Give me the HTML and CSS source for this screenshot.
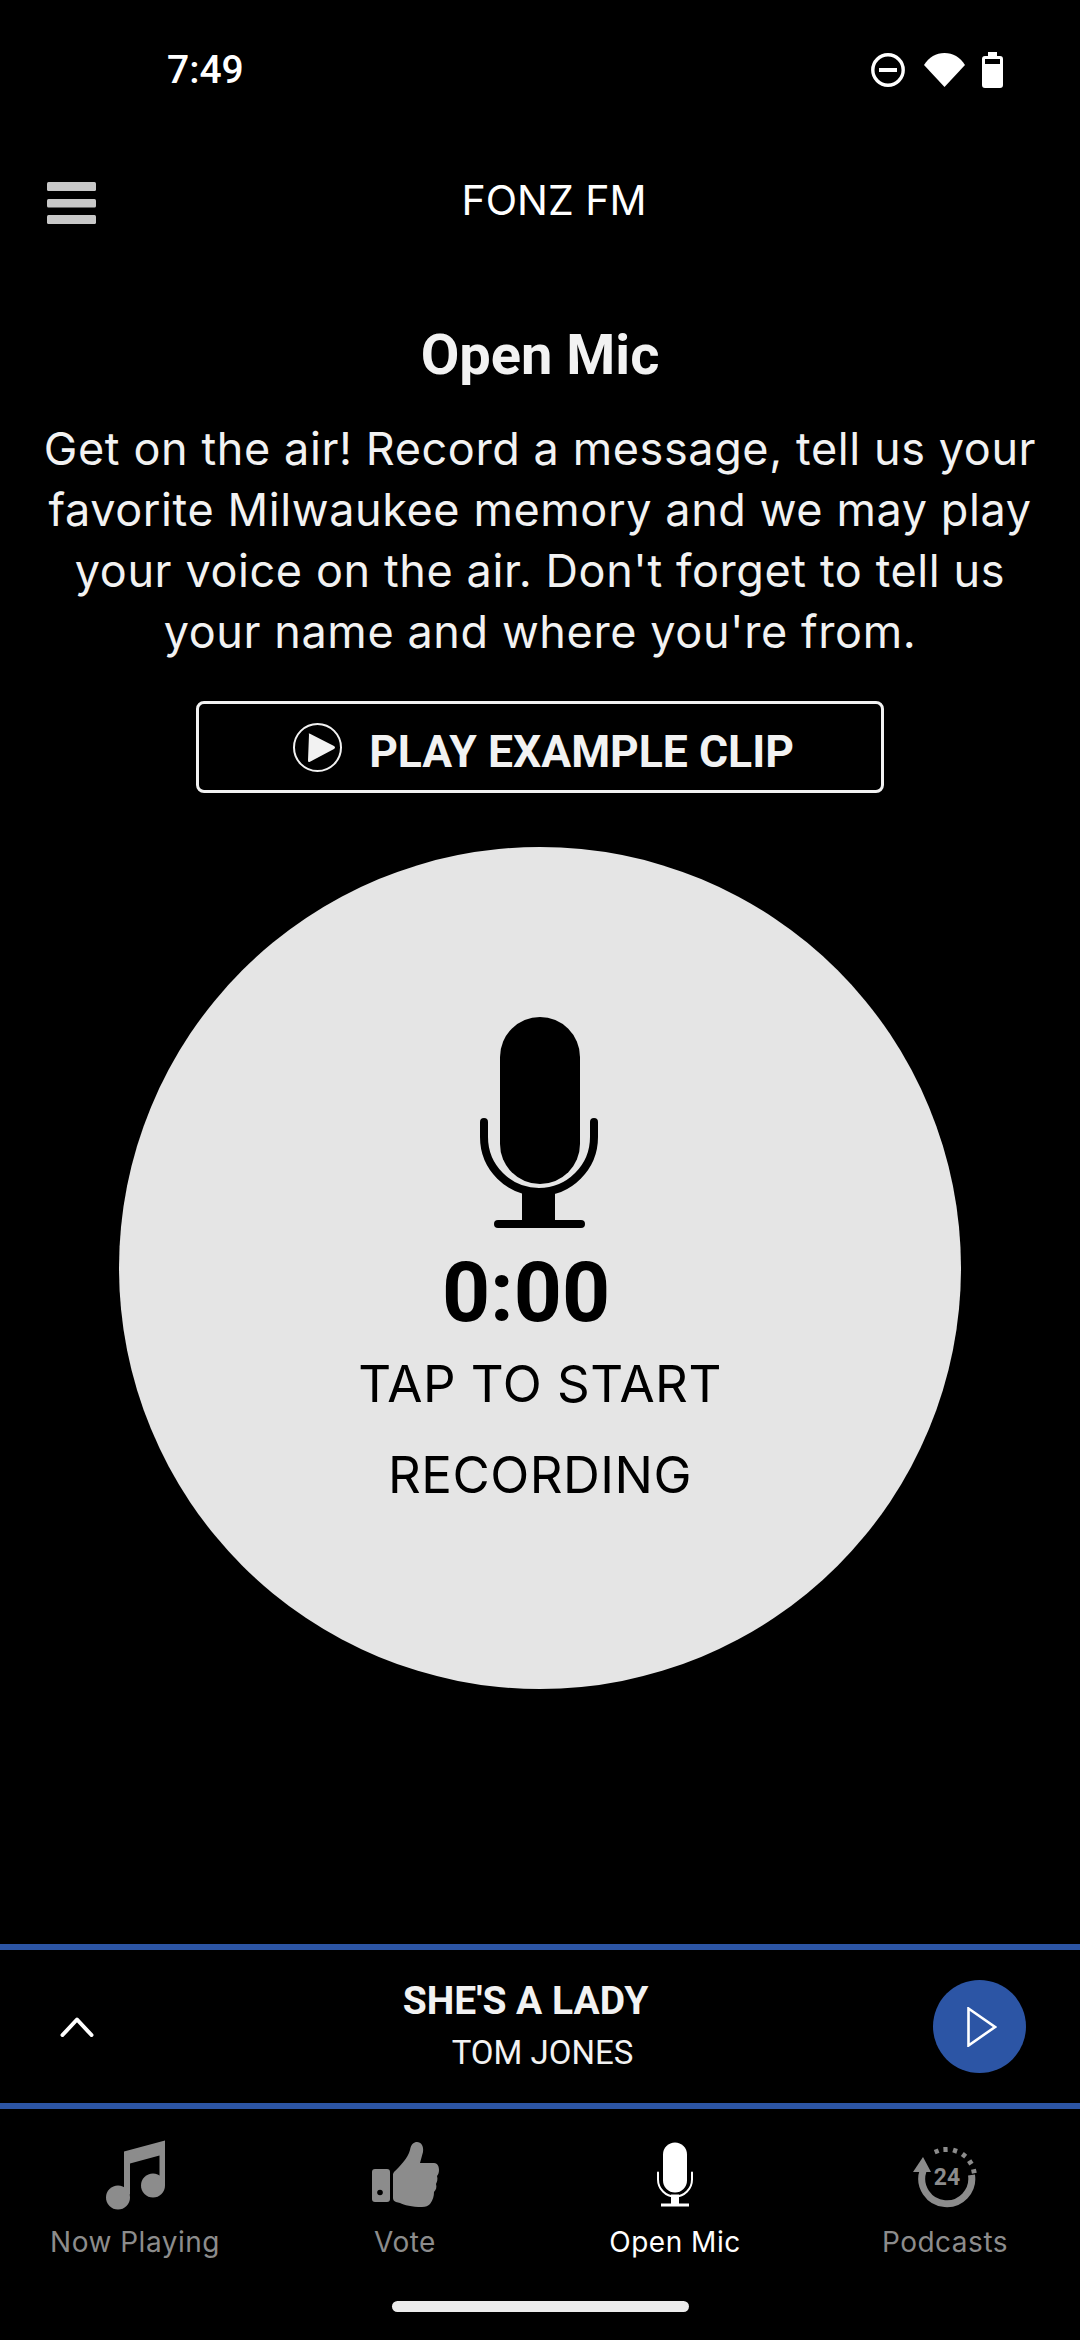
FILE: index.html
```html
<!DOCTYPE html>
<html lang="en">
<head>
<meta charset="utf-8">
<title>FONZ FM - Open Mic</title>
<link rel="stylesheet" href="styles.css">
</head>
<body>
<div class="screen">
  <div class="status">
    <span class="time">7:49</span>
    <div class="status-icons">
      <svg class="ic-dnd" viewBox="0 0 34 34"><circle cx="17" cy="17" r="15.2" fill="none" stroke="#fff" stroke-width="3.4"/><rect x="8" y="15" width="18" height="4" fill="#fff"/></svg>
      <svg class="ic-wifi" viewBox="0 0 41 34"><path d="M0 12 C5 4 12 0 20.500 0 C29 0 36 4 41 12 L20.500 34 Z" fill="#fff"/></svg>
      <svg class="ic-batt" viewBox="0 0 21 36"><path fill-rule="evenodd" d="M6 0 H15 V4 H18 Q21 4 21 7 V33 Q21 36 18 36 H3 Q0 36 0 33 V7 Q0 4 3 4 H6 Z M3 7 V12 H18 V7 Z" fill="#fff"/></svg>
    </div>
  </div>
  <header class="topbar">
    <svg class="ic-menu" viewBox="0 0 49 42"><rect y="0" width="49" height="9" rx="1.500"/><rect y="17" width="49" height="8.500" rx="1.500"/><rect y="33" width="49" height="9" rx="1.500"/></svg>
    <h1 class="brand">FONZ FM</h1>
  </header>
  <main class="content">
    <h2 class="heading">Open Mic</h2>
    <p class="intro">Get on the air! Record a message, tell us your<br>favorite Milwaukee memory and we may play<br>your voice on the air. Don't forget to tell us<br>your name and where you're from.</p>
    <button class="example">
      <svg class="ic-example" viewBox="0 0 49 49"><circle cx="24.500" cy="24.500" r="23.500" fill="none" stroke="#f2f2f2" stroke-width="2"/><path d="M16 11.500 Q15 10.500 16.500 10.500 L41 23 Q43 24.500 41 26 L16.500 39 Q15 39.500 15 37.500 Z" fill="#f2f2f2"/></svg>
      <span class="example-label">PLAY EXAMPLE CLIP</span>
    </button>
    <div class="record">
      <svg class="ic-mic-large" viewBox="0 0 118 211">
        <rect x="20" y="0" width="80" height="167" rx="40"/>
        <path d="M4 105 V120 A55 55 0 0 0 114 120 V105" fill="none" stroke="#000" stroke-width="8" stroke-linecap="round"/>
        <rect x="42" y="172" width="33" height="39"/>
        <rect x="14" y="203" width="91" height="8" rx="4"/>
      </svg>
      <div class="timer">0:00</div>
      <div class="tap">TAP TO START<br>RECORDING</div>
    </div>
  </main>
  <section class="player">
    <svg class="ic-chevron" viewBox="0 0 34 20"><path d="M2.500 18 L17 2.500 L31.500 18" fill="none" stroke="#fff" stroke-width="4" stroke-linecap="round" stroke-linejoin="round"/></svg>
    <div class="track">
      <div class="song">SHE'S A LADY</div>
      <div class="artist">TOM JONES</div>
    </div>
    <div class="play-round">
      <svg class="ic-play" viewBox="0 0 30 40"><path d="M1.500 1.500 L28 20 L1.500 38.500 Z" fill="none" stroke="#fff" stroke-width="2.600"/></svg>
    </div>
  </section>
  <nav class="tabs">
    <div class="tab">
      <svg class="ic-tab ic-note" viewBox="0 0 59 69"><path d="M18 11 L59 0 V45 H53.500 V15 L24 23 V54 H18 Z"/><circle cx="12" cy="57" r="12"/><circle cx="47" cy="45" r="12"/></svg>
      <span>Now Playing</span>
    </div>
    <div class="tab">
      <svg class="ic-tab ic-thumb" viewBox="0 0 67 66"><rect x="0" y="27" width="18" height="33" rx="3"/><circle cx="8" cy="50.500" r="2.800" fill="#000"/><path d="M22 30 C28 24 36 16 38 8 C39 2 42 0 45 0 C49 0 52 4 51 10 C50 14 49 17 48 21 L62 21 C66 21 67 25 67 28 C67 31 66 33 65 34 C66 37 65 40 64 42 C65 45 64 48 62 50 C62 54 61 58 58 62 C56 64 54 65 50 65 C40 65 32 63 28 61 L24 60 C22 59 21 58 21 56 L21 32 Z"/></svg>
      <span>Vote</span>
    </div>
    <div class="tab is-active">
      <svg class="ic-tab ic-mic" viewBox="0 0 36 65"><rect x="6" y="0" width="24" height="50" rx="12"/><path d="M1 30 V37 A17 17 0 0 0 35 37 V30" fill="none" stroke="#fff" stroke-width="2" stroke-linecap="round"/><rect x="14" y="52" width="8" height="11"/><rect x="4" y="61" width="28" height="3"/></svg>
      <span>Open Mic</span>
    </div>
    <div class="tab">
      <svg class="ic-tab ic-pod" viewBox="0 0 64 60">
        <path d="M10 26 A25 25 0 1 0 58.500 30" fill="none" stroke="#8c8c8c" stroke-width="7"/>
        <path d="M10 12 L0 27 H18 Z"/>
        <g stroke="#8c8c8c" stroke-width="4.200" fill="none">
          <path d="M24.500 8.500 L22.800 4.200"/><path d="M32.600 7 L32.400 2"/><path d="M41.300 8 L42.800 3.300"/><path d="M49.500 12.300 L52.500 8.400"/><path d="M55.200 18.800 L59.400 16.100"/><path d="M58.500 26.800 L63.300 25.800"/>
        </g>
        <text class="pod-num" x="34" y="40" text-anchor="middle">24</text>
      </svg>
      <span>Podcasts</span>
    </div>
  </nav>
  <div class="home"><div class="home-bar"></div></div>
</div>
</body>
</html>
```
FILE: styles.css
```css
* { box-sizing: border-box; }
html, body { margin: 0; padding: 0; background: #000; }
.screen {
  width: 1080px;
  height: 2340px;
  display: flex;
  flex-direction: column;
  overflow: hidden;
  background: #000;
  color: #f2f2f2;
  font-family: Inter, "Noto Sans", sans-serif;
}
.status {
  height: 140px;
  flex: none;
  display: flex;
  align-items: center;
  justify-content: space-between;
  padding: 0 77px 0 167px;
}
.time { font: 500 39px Roboto, sans-serif; color: #fff; }
.status-icons { display: flex; align-items: center; gap: 17px; }
.ic-dnd { width: 34px; height: 34px; display: block; margin-right: 2px; }
.ic-wifi { width: 41px; height: 34px; display: block; }
.ic-batt { width: 21px; height: 36px; display: block; }
.topbar {
  height: 126px;
  flex: none;
  display: flex;
  align-items: center;
  padding: 0 68px 0 47px;
}
.ic-menu { width: 49px; height: 42px; fill: #c8c8c8; flex: none; }
.brand {
  flex: 1;
  margin: 0;
  padding-bottom: 6px;
  text-align: center;
  font-size: 41px;
  font-weight: 400;
  line-height: 50px;
  color: #fff;
}
.content {
  flex: 1;
  display: flex;
  flex-direction: column;
  align-items: center;
  padding-top: 58px;
}
.heading {
  margin: 0;
  font: 700 56px/62px Roboto, sans-serif;
}
.intro {
  margin: 32px 0 0;
  text-align: center;
  font-size: 45px;
  letter-spacing: .6px;
  line-height: 61px;
  white-space: nowrap;
}
.example {
  margin-top: 39px;
  width: 688px;
  height: 92px;
  display: flex;
  align-items: center;
  justify-content: center;
  gap: 27px;
  background: #000;
  border: 3px solid #f2f2f2;
  border-radius: 8px;
  color: #f2f2f2;
  font: 700 44.5px Roboto, sans-serif;
  padding: 0 0 0 7px;
}
.example-label { margin-top: 9px; }
.ic-example { width: 49px; height: 49px; flex: none; }
.record {
  margin-top: 54px;
  width: 842px;
  height: 842px;
  flex: none;
  border-radius: 50%;
  background: #e5e5e5;
  color: #000;
  display: flex;
  flex-direction: column;
  align-items: center;
  padding-top: 170px;
}
.ic-mic-large { width: 118px; height: 211px; flex: none; margin-left: -2px; }
.timer {
  margin-top: 18px;
  margin-left: -28px;
  font: 700 84px/94px Roboto, sans-serif;
}
.tap {
  margin-top: -2px;
  text-align: center;
  font-size: 51px;
  letter-spacing: .5px;
  line-height: 91px;
}
.player {
  height: 165px;
  flex: none;
  border-top: 6px solid #2c55a5;
  border-bottom: 6px solid #2c55a5;
  display: flex;
  align-items: center;
  padding: 0 54px 0 60px;
}
.ic-chevron { width: 34px; height: 20px; flex: none; }
.track { flex: 1; display: flex; flex-direction: column; align-items: center; }
.song { font: 700 39px/48px Roboto, sans-serif; margin-left: 24px; }
.artist { font: 400 33px/48px Roboto, sans-serif; margin: 4px 0 0 58px; color: #f2f2f2; }
.play-round {
  width: 93px;
  height: 93px;
  border-radius: 50%;
  background: #2c55a5;
  flex: none;
  display: flex;
  align-items: center;
  justify-content: center;
}
.ic-play { width: 30px; height: 40px; margin-left: 5px; }
.tabs {
  height: 180px;
  flex: none;
  display: grid;
  grid-template-columns: repeat(4, 270px);
  padding-top: 31px;
}
.tab {
  display: flex;
  flex-direction: column;
  align-items: center;
  color: #8c8c8c;
  fill: #8c8c8c;
  font-size: 28px;
  letter-spacing: .5px;
  line-height: 40px;
}
.tab svg { height: 70px; flex: none; margin-bottom: 12px; }
.ic-note { width: 59px; }
.ic-thumb { width: 67px; }
.ic-mic { width: 36px; }
.ic-pod { width: 64px; }
.tab.is-active { color: #fff; fill: #fff; }
.pod-num { font: 700 23px Roboto, sans-serif; fill: #8c8c8c; letter-spacing: 0; }
.home {
  height: 51px;
  flex: none;
  display: flex;
  justify-content: center;
  align-items: flex-start;
  padding-top: 12px;
}
.home-bar { width: 297px; height: 11px; border-radius: 6px; background: #ececec; }
```
